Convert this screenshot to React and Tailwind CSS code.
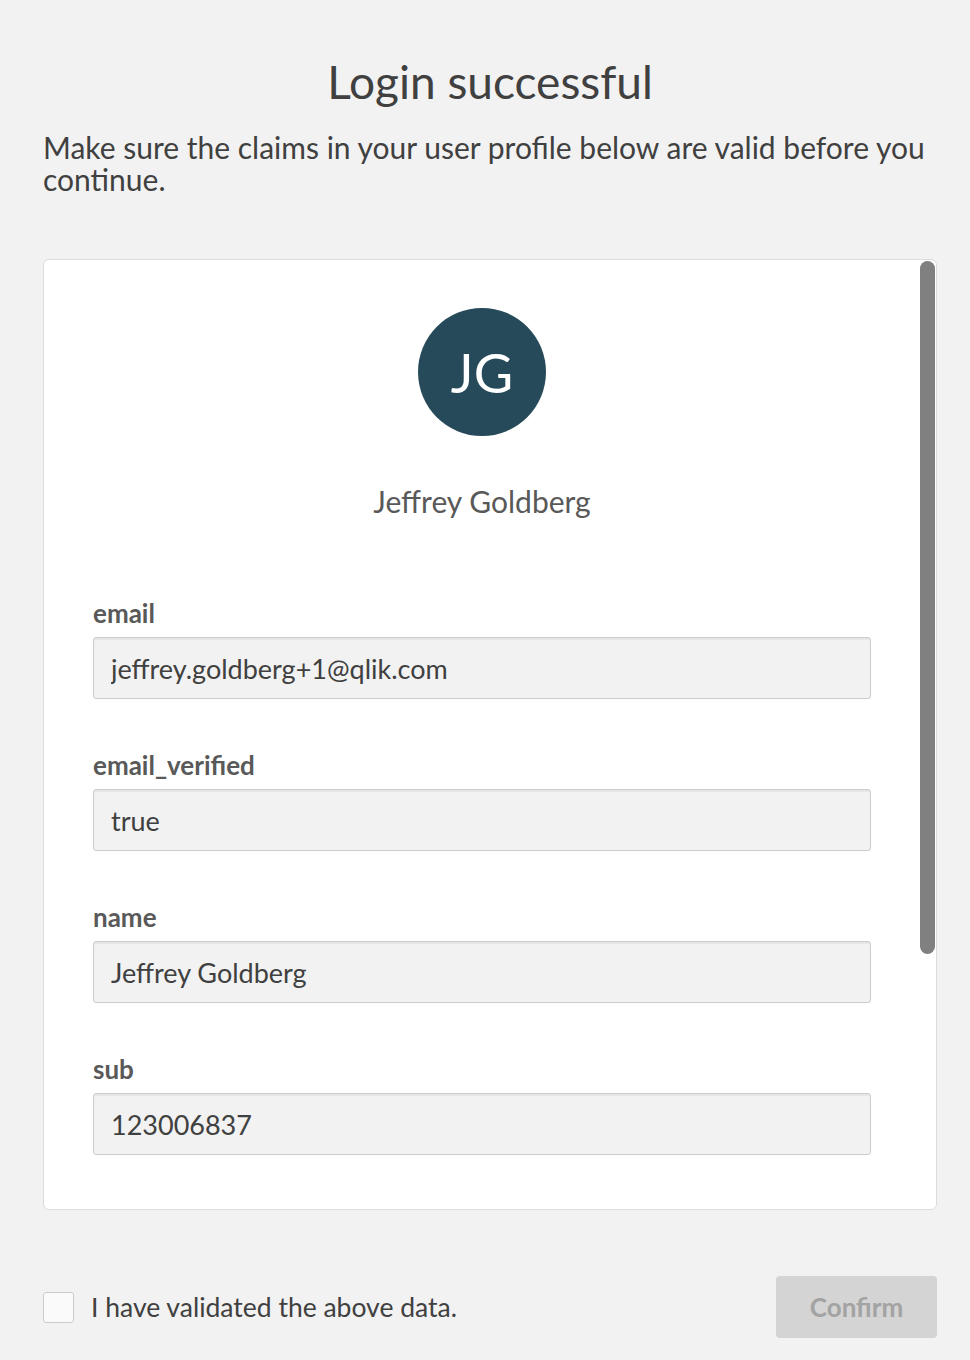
import React, { useState } from "react";

const claims = [
  { label: "email", value: "jeffrey.goldberg+1@qlik.com" },
  { label: "email_verified", value: "true" },
  { label: "name", value: "Jeffrey Goldberg" },
  { label: "sub", value: "123006837" },
];

const font = { fontFamily: "Lato, 'Open Sans', sans-serif" };

export default function App() {
  const [checked, setChecked] = useState(false);

  return (
    <div
      className="min-h-[1360px] bg-[#f2f2f2] pl-[43px] pr-[33px] text-[#404040]"
      style={font}
    >
      <h1 className="pt-[54px] text-center text-[46px] leading-[56px] font-normal">
        Login successful
      </h1>
      <p className="mt-[21px] text-[30px] leading-[32px]">
        Make sure the claims in your user profile below are valid before you
        continue.
      </p>

      <div className="mt-[64px] flex h-[951px] overflow-hidden rounded-[6px] border border-[#dcdcdc] bg-white">
        <div className="flex-1 px-[49px] pt-[48px]">
          <div className="flex justify-center">
            <div className="flex h-[128px] w-[128px] items-center justify-center rounded-full bg-[#264a5a] text-[54px] text-white">
              JG
            </div>
          </div>
          <div className="mt-[47px] text-center text-[30px] leading-[36px] text-[#595959]">
            Jeffrey Goldberg
          </div>

          <div className="mt-[78px] flex flex-col gap-[50px]">
            {claims.map((c) => (
              <div key={c.label}>
                <div className="text-[26px] leading-[32px] font-bold text-[#595959]">
                  {c.label}
                </div>
                <input
                  readOnly
                  value={c.value}
                  className="mt-[8px] h-[62px] w-full rounded-[3px] border border-[#cccccc] bg-[#f2f2f2] px-[17px] text-[27px] text-[#404040] shadow-[inset_0_2px_1px_rgba(0,0,0,0.05)] outline-none"
                  style={font}
                />
              </div>
            ))}
          </div>
        </div>
        <div className="w-[16px] pt-[1px]">
          <div className="h-[693px] w-[15px] rounded-full bg-[#808080]" />
        </div>
      </div>

      <div className="mt-[66px] flex items-center justify-between">
        <label className="flex cursor-pointer items-center gap-[17px]">
          <span
            onClick={() => setChecked(!checked)}
            className="flex h-[31px] w-[31px] items-center justify-center rounded-[3px] border border-[#cccccc] bg-[#fafafa] text-[#404040]"
          >
            {checked ? "✓" : ""}
          </span>
          <span className="text-[26.5px] leading-[32px] text-[#404040]">
            I have validated the above data.
          </span>
        </label>
        <button
          disabled={!checked}
          className="h-[62px] w-[161px] rounded-[4px] bg-[#d4d4d4] text-[26px] font-bold text-[#a3a3a3]"
          style={font}
        >
          Confirm
        </button>
      </div>
    </div>
  );
}
